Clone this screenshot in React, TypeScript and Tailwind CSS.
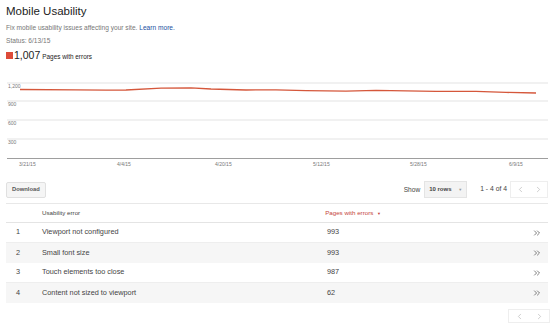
import React from 'react';
import { ChevronLeft, ChevronRight, ChevronsRight } from 'lucide-react';

const rows = [
  { id: 1, name: 'Viewport not configured', count: '993' },
  { id: 2, name: 'Small font size', count: '993' },
  { id: 3, name: 'Touch elements too close', count: '987' },
  { id: 4, name: 'Content not sized to viewport', count: '62' },
];

const Chart: React.FC = () => {
  const grid = [
    { y: 9, label: '1,200' },
    { y: 27, label: '900' },
    { y: 46, label: '600' },
    { y: 65, label: '300' },
  ];
  const xLabels = [
    { x: 13, t: '3/21/15' },
    { x: 111, t: '4/4/15' },
    { x: 209, t: '4/20/15' },
    { x: 307, t: '5/12/15' },
    { x: 404, t: '5/28/15' },
    { x: 503, t: '6/9/15' },
  ];
  return (
    <svg width="542" height="96" className="block">
      {grid.map((g) => (
        <g key={g.label}>
          <line x1="1" x2="542" y1={g.y} y2={g.y} stroke="#e3e3e3" strokeWidth="1" />
          <text x="2" y={g.y + 5} fontSize="5" fill="#777" fontFamily="Liberation Sans, Arial, sans-serif">
            {g.label}
          </text>
        </g>
      ))}
      <line x1="1" x2="542" y1="84.5" y2="84.5" stroke="#9e9e9e" strokeWidth="1" />
      {xLabels.map((l) => (
        <text key={l.t} x={l.x} y="92" fontSize="5" fill="#777" fontFamily="Liberation Sans, Arial, sans-serif">
          {l.t}
        </text>
      ))}
      <polyline
        fill="none"
        stroke="#d5573b"
        strokeWidth="1.3"
        points="14,15.5 70,15.8 100,16.2 120,16 155,14.2 185,13.8 205,15 240,16 270,15.8 300,16.6 340,17.2 370,16.4 400,16.8 430,17.4 470,17.4 500,18.4 530,19"
      />
    </svg>
  );
};

const App: React.FC = () => {
  return (
    <div className="w-[560px] h-[328px] bg-white overflow-hidden px-[6px] pt-[3px] font-['Liberation_Sans',Arial,sans-serif] text-[#333]">
      {/* Header */}
      <h1 className="text-[11.5px] leading-[16px] text-[#222]">Mobile Usability</h1>
      <p className="mt-[4px] text-[6.6px] leading-[9px] text-[#777]">
        Fix mobile usability issues affecting your site. <span className="text-[#1a4fa0]">Learn more.</span>
      </p>
      <p className="mt-[4px] text-[6.6px] leading-[9px] text-[#777]">Status: 6/13/15</p>
      <div className="mt-[4px] flex items-center h-[12px]">
        <div className="w-[7px] h-[7px] bg-[#dd4b39]" />
        <span className="ml-[1px] text-[10.5px] leading-[12px] text-[#222]">1,007</span>
        <span className="ml-[2px] mt-[2px] text-[6.4px] leading-[9px] text-[#222]">Pages with errors</span>
      </div>

      {/* Chart */}
      <div className="mt-[13px]">
        <Chart />
      </div>

      {/* Toolbar */}
      <div className="mt-[11px] flex items-center h-[17px]">
        <button className="h-[16px] px-[5px] bg-[#f5f5f5] border border-[#e0e0e0] rounded-[2px] text-[5.8px] font-bold text-[#555]">
          Download
        </button>
        <div className="ml-auto flex items-center">
          <span className="text-[6.6px] text-[#444]">Show</span>
          <div className="ml-[4px] w-[43px] h-[17px] bg-[#f3f3f3] border border-[#e4e4e4] flex items-center px-[4px]">
            <span className="text-[6px] font-bold text-[#444]">10 rows</span>
            <span className="ml-auto text-[4px] text-[#999]">▼</span>
          </div>
          <span className="ml-[13px] text-[6.8px] text-[#444]">1 - 4 of 4</span>
          <div className="ml-[3px] mr-[6px] w-[38px] h-[17px] border border-[#eee] flex items-center justify-around">
            <ChevronLeft size={9} strokeWidth={1.5} className="text-[#aaa]" />
            <ChevronRight size={9} strokeWidth={1.5} className="text-[#aaa]" />
          </div>
        </div>
      </div>

      {/* Table */}
      <div className="mt-[5px] w-[542px] border-t border-[#e8e8e8]">
        <div className="h-[19px] flex items-center border-b border-[#e4e4e4] text-[6.2px]">
          <span className="ml-[36px] text-[#444]">Usability error</span>
          <span className="ml-[245px] text-[#c5453a]">
            Pages with errors <span className="text-[4px] ml-[2px]">▼</span>
          </span>
        </div>
        {rows.map((r, i) => (
          <div
            key={r.id}
            className={`h-[20px] flex items-center text-[7.3px] text-[#444] ${i % 2 === 1 ? 'bg-[#f6f6f6]' : 'bg-white'} ${i === 0 || i === 2 ? 'border-b border-[#eeeeee]' : ''}`}
          >
            <span className="w-[36px] pl-[10px]">{r.id}</span>
            <span className="w-[285px]">{r.name}</span>
            <span>{r.count}</span>
            <ChevronsRight size={10} strokeWidth={1.8} className="ml-auto mr-[6px] text-[#555]" />
          </div>
        ))}
      </div>

      {/* Bottom pagination */}
      <div className="mt-[6px] flex justify-end w-[544px]">
        <div className="w-[42px] h-[14px] border border-[#eee] flex items-center justify-around">
          <ChevronLeft size={9} strokeWidth={1.5} className="text-[#aaa]" />
          <ChevronRight size={9} strokeWidth={1.5} className="text-[#aaa]" />
        </div>
      </div>
    </div>
  );
};

export default App;
